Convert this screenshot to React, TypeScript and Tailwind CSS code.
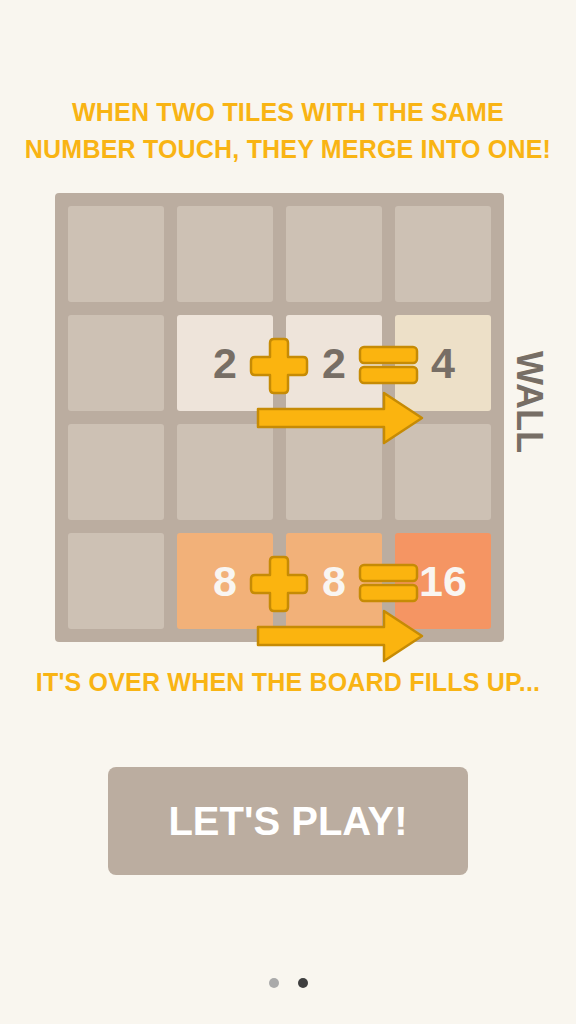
import React from "react";

type Tile = { value?: number };

const rows: Tile[][] = [
  [{}, {}, {}, {}],
  [{}, { value: 2 }, { value: 2 }, { value: 4 }],
  [{}, {}, {}, {}],
  [{}, { value: 8 }, { value: 8 }, { value: 16 }],
];

function tileClass(v?: number) {
  switch (v) {
    case 2:
      return "bg-[#eee4da] text-[#776e65]";
    case 4:
      return "bg-[#ede0c8] text-[#776e65]";
    case 8:
      return "bg-[#f2b179] text-[#f9f6f2]";
    case 16:
      return "bg-[#f59563] text-[#f9f6f2]";
    default:
      return "bg-[#cdc1b4]";
  }
}

// plus, equals and arrows drawn over the board
function Overlay() {
  const fill = "#fbb40f";
  const stroke = "#c68b05";
  return (
    <svg
      className="absolute left-0 top-0 overflow-visible pointer-events-none"
      width={449}
      height={449}
      viewBox="0 0 449 449"
    >
      <g fill={fill} stroke={stroke} strokeWidth={2.5} strokeLinejoin="round">
        <path d="M219 146 H229 Q233 146 233 150 V164 H248 Q252 164 252 168 V178 Q252 182 248 182 H233 V196 Q233 200 229 200 H219 Q215 200 215 196 V182 H200 Q196 182 196 178 V168 Q196 164 200 164 H215 V150 Q215 146 219 146 Z" />
        <rect x={305} y={154} width={57} height={16} rx={4} />
        <rect x={305} y={174} width={57} height={16} rx={4} />
        <path d="M203 216 H329 V200 L367 225 L329 250 V234 H203 Z" />

        <path d="M219 364 H229 Q233 364 233 368 V382 H248 Q252 382 252 386 V396 Q252 400 248 400 H233 V414 Q233 418 229 418 H219 Q215 418 215 414 V400 H200 Q196 400 196 396 V386 Q196 382 200 382 H215 V368 Q215 364 219 364 Z" />
        <rect x={305} y={372} width={57} height={16} rx={4} />
        <rect x={305} y={392} width={57} height={16} rx={4} />
        <path d="M203 434 H329 V418 L367 443 L329 468 V452 H203 Z" />
      </g>
    </svg>
  );
}

export default function App() {
  return (
    <div
      className="w-[576px] h-[1024px] bg-[#f9f6ef] flex flex-col items-center overflow-hidden"
      style={{ fontFamily: '"Liberation Sans", Arial, sans-serif' }}
    >
      <p className="mt-[94px] text-center text-[25px] leading-[37px] font-bold text-[#f9b414] tracking-[0.2px]">
        WHEN TWO TILES WITH THE SAME
        <br />
        NUMBER TOUCH, THEY MERGE INTO ONE!
      </p>

      <div className="mt-[25px] w-full flex flex-row pl-[55px]">
        <div className="relative w-[449px] h-[449px] rounded-[4px] bg-[#bbada0] p-[13px] grid grid-cols-4 gap-[13px]">
          {rows.flat().map((t, i) => (
            <div
              key={i}
              className={`w-[96px] h-[96px] rounded-[3px] flex items-center justify-center text-[43px] font-bold ${tileClass(t.value)}`}
            >
              {t.value ?? ""}
            </div>
          ))}
          <Overlay />
        </div>
        <div className="ml-[7px] mt-[158px] [writing-mode:vertical-rl] text-[36px] leading-[36px] font-bold text-[#776e65]">
          WALL
        </div>
      </div>

      <p className="mt-[22px] text-center text-[25px] leading-[37px] font-bold text-[#f9b414] tracking-[0.2px]">
        IT'S OVER WHEN THE BOARD FILLS UP...
      </p>

      <button className="mt-[66px] w-[360px] h-[108px] rounded-[8px] bg-[#bbada0] text-white text-[40px] font-bold flex items-center justify-center">
        LET'S PLAY!
      </button>

      <div className="mt-[103px] flex flex-row gap-[19px]">
        <span className="w-[10px] h-[10px] rounded-full bg-[#aaaaaa]" />
        <span className="w-[10px] h-[10px] rounded-full bg-[#3f3f3f]" />
      </div>
    </div>
  );
}
